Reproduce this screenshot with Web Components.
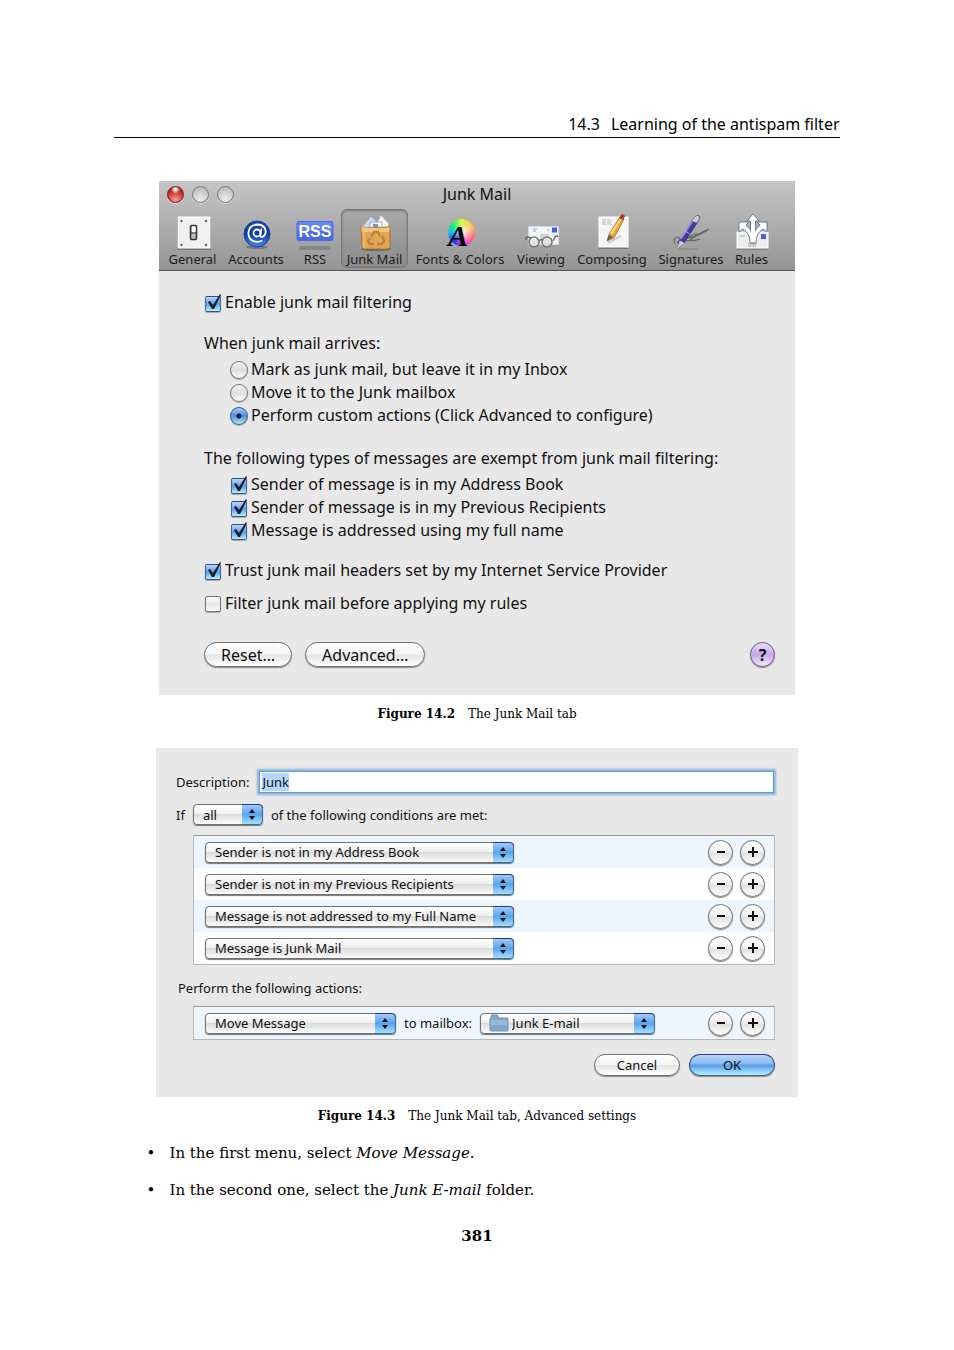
<!DOCTYPE html>
<html lang="en">
<head>
<meta charset="UTF-8">
<meta name="viewport" content="width=device-width, initial-scale=1.0">
<title>14.3 Learning of the antispam filter</title>
<style>
    body {
        margin: 0;
        background: #fff;
        color: #000;
    }
</style>
</head>
<body>
<manual-page section="14.3" heading="Learning of the antispam filter" number="381">
    <manual-figure label="Figure 14.2" caption="The Junk Mail tab">
        <junk-window></junk-window>
    </manual-figure>
    <manual-figure label="Figure 14.3" caption="The Junk Mail tab, Advanced settings">
        <rule-sheet></rule-sheet>
    </manual-figure>
    <manual-steps>
        <li>In the first menu, select <em>Move Message</em>.</li>
        <li>In the second one, select the <em>Junk E-mail</em> folder.</li>
    </manual-steps>
</manual-page>

<script>
const ICONS = {
    general: `
        <rect x="3" y="5" width="34" height="32" fill="#777"/>
        <rect x="4" y="4" width="32" height="31" fill="#f0f0f0" stroke="#fff"/>
        <g fill="#666"><circle cx="7.5" cy="8" r="1.2"/><circle cx="32" cy="8" r="1.2"/><circle cx="7.5" cy="32" r="1.2"/><circle cx="32" cy="32" r="1.2"/></g>
        <rect x="16.5" y="12.5" width="6" height="14" rx="1" fill="#bbb" stroke="#333" stroke-width="1.5"/>
        <rect x="18" y="13.5" width="3.5" height="6" fill="#fff"/>
        <path d="M17 20h5" stroke="#333"/>`,
    accounts: `
        <defs><linearGradient id="g" x2="0" y2="1"><stop stop-color="#1c4fb0"/><stop offset=".5" stop-color="#1238a0"/><stop offset="1" stop-color="#3f8eea"/></linearGradient></defs>
        <ellipse cx="20" cy="34" rx="11" ry="2" fill="#555" opacity=".5"/>
        <circle cx="20" cy="21" r="13" fill="url(#g)" stroke="#1a3f92"/>
        <circle cx="20" cy="20" r="3.5" fill="none" stroke="#fff" stroke-width="1.8"/>
        <path d="M24.5 15.5l-1.2 6.5q0 2.5 2.4 1.8q3-1.8 3-5.3q-.7-6.800-8.2-7q-8.5.5-9.2 8.500q.2 8.3 8.5 8.800q3 0 5.5-1.3" fill="none" stroke="#fff" stroke-width="1.8"/>`,
    rss: `
        <rect x="3" y="33" width="32" height="4" rx="2" fill="#666" opacity=".45"/>
        <rect x=".5" y="8" width="37" height="20" rx="2.5" fill="#4a6be6"/>
        <rect x="1.5" y="9" width="35" height="9" rx="2" fill="#6485f2"/>
        <text x="19" y="24" text-anchor="middle" font-family="Liberation Sans, sans-serif" font-weight="700" font-size="16" fill="#fff">RSS</text>`,
    junk: `
        <ellipse cx="20" cy="36" rx="15" ry="2" fill="#444" opacity=".5"/>
        <path d="M7 13l8-10 9 9v4H8z" fill="#cbd9f3" stroke="#8da0c9" stroke-width=".7"/>
        <path d="M21 10l4-8 8 9-2 6H19z" fill="#f8f8f5" stroke="#aaa" stroke-width=".7"/>
        <path d="M14 9h12v9H14z" fill="#eef3ff" stroke="#8794b5" stroke-width=".7"/>
        <path d="M17 11h5v3h-5z" fill="#7e93bd"/>
        <path d="M5 13l3 2 24-1 2-1v21l-2 2H8l-2-2z" fill="#e2a652" stroke="#a66b20" stroke-width=".8"/>
        <path d="M5 13l3 2h24l2-2-1 6H6z" fill="#f3c57c"/>
        <path d="M8 19v16" stroke="#f2ca8c"/>
        <path d="M15 24l3-5h4l2 4M26 23l2 5-2 3h-5M18 31h-4l-2-3 2-3" fill="none" stroke="#bb8540" stroke-width="2.5"/>`,
    fonts: `
        <foreignObject x="7" y="6" width="27" height="28"><div style="width:27px;height:27px;border-radius:50%;background:radial-gradient(circle at 60% 50%,#fffc,#fff0 55%),conic-gradient(#cf3,#fb4 60deg,#f65 100deg,#f4a 145deg,#b4f 180deg,#23e 220deg,#2be 270deg,#1e7 310deg,#cf3)"></div></foreignObject>
        <text x="7" y="33" font-family="Liberation Serif, serif" font-weight="700" font-style="italic" font-size="30" fill="#000">A</text>`,
    viewing: `
        <rect x="6" y="13" width="31" height="19" fill="#f2f4f7" stroke="#9fb4d0" stroke-width=".8"/>
        <rect x="30" y="14.5" width="5" height="5" fill="#3764e4"/>
        <path d="M11 16h4M11 18h3M25 17h2M18 22h9M18 24h8" stroke="#aaa"/>
        <path d="M5 27q-3-2 0-3l5 1M31 28l2-4q2-2 3 0M17 28q3-3 5 0" fill="none" stroke="#666" stroke-width="1.3"/>
        <circle cx="12" cy="29" r="5" fill="#ddd" fill-opacity=".8" stroke="#777" stroke-width="1.5"/>
        <circle cx="25" cy="29" r="5" fill="#ddd" fill-opacity=".8" stroke="#777" stroke-width="1.5"/>
        <path d="M9 27q2-3 5-1M22 27q2-3 5-1" stroke="#fff" fill="none"/>`,
    composing: `
        <rect x="6" y="5" width="29" height="31" fill="#777"/>
        <rect x="6" y="4" width="29" height="30" fill="#f4f4f4" stroke="#fff"/>
        <path d="M9 7h9M9 9h9M9 11h9" stroke="#ccc" stroke-width="1.5" stroke-dasharray="4 1"/>
        <path d="M15 30l13-7" stroke="#999" stroke-width="2" opacity=".4"/>
        <path d="M14 28l2-7L27 4l4 2-10 19z" fill="#e7a43b" stroke="#8c6428" stroke-width=".7"/>
        <path d="M17 20L28 4l1.500 1L19 22z" fill="#ffd27a"/>
        <path d="M14 28l2-6 4 2z" fill="#6b5b48"/>
        <path d="M26 5l2-3q2-2 4 1l-2 4z" fill="#a53d31"/>`,
    signatures: `
        <path d="M3 31q-3-6 3-7 4 2-1 6l11-5q5-4 9-4l-8 7q10-8 20-12-8 6-20 9M10 27q10 2 18-1" fill="none" stroke="#666" stroke-width="1.1"/>
        <path d="M6 36h20" stroke="#777" stroke-width="2" opacity=".4"/>
        <path d="M5 36l2-7L21 7l5-5 2 2-3 6L12 30z" fill="#433aa9" stroke="#26256d" stroke-width=".7"/>
        <path d="M19 8l6-6 3 2-3 6z" fill="#c8d0dc" stroke="#667" stroke-width=".7"/>
        <path d="M9 26L20 9" stroke="#928be6" stroke-width="1.5"/>
        <path d="M13 18l5 3M5 36l3-8 4 2z" stroke="#ccc" stroke-width=".7" fill="#ccc"/>`,
    rules: `
        <path d="M4 36h31" stroke="#666" stroke-width="2" opacity=".5"/>
        <rect x="4" y="19" width="31" height="16" fill="#eee" stroke="#fff"/>
        <rect x="28" y="21" width="5" height="5" fill="#4268e8"/>
        <path d="M15 31h9M15 33h8M7 23h5" stroke="#aaa"/>
        <path d="M17.500 30V8h-3.500l6-7 6 7h-3.500v22z" fill="#fff" stroke="#5b7594" stroke-width=".9"/>
        <path d="M17 30q0-10-7-14l-4 3V9h10l-3 3q5 4 7 11 2-7 7-11l-3-3h10v10l-4-3q-7 4-7 14z" fill="#fff" stroke="#5b7594" stroke-width=".9"/>
        <path d="M18 9h4v19h-4z" fill="#fff"/>`
};

class ManualPage extends HTMLElement {
    constructor(){
        super();
        this.attachShadow({mode: 'open'});
    }

    connectedCallback(){
        this.shadowRoot.innerHTML = `
        <style>
        :host {
            display: block;
            box-sizing: border-box;
            padding: 114px 12% 96px;
            font-family: "DejaVu Serif", serif;
            font-size: 15px;
        }

        header {
            display: flex;
            justify-content: flex-end;
            gap: 11px;
            padding-bottom: 2px;
            margin-bottom: 43px;
            border-bottom: 1px solid #000;
            font: 16px/21px "Noto Sans", sans-serif;
        }

        h1 {
            margin: 0;
            font: inherit;
        }

        footer {
            text-align: center;
            font-weight: bold;
            line-height: 24px;
            margin-top: 22px;
        }
        </style>

        <header><span>${this.getAttribute('section')}</span><h1>${this.getAttribute('heading')}</h1></header>
        <main><slot></slot></main>
        <footer>${this.getAttribute('number')}</footer>
        `;
    }
}

class ManualFigure extends HTMLElement {
    constructor(){
        super();
        this.attachShadow({mode: 'open'});
    }

    connectedCallback(){
        this.shadowRoot.innerHTML = `
        <style>
        :host {
            display: block;
        }

        figure {
            display: flex;
            flex-direction: column;
            align-items: center;
            margin: 0;
        }

        figcaption {
            display: flex;
            gap: 13px;
            padding: 9px 0 23px;
            font-size: 12px;
            line-height: 21px;
        }
        </style>

        <figure>
            <slot></slot>
            <figcaption><b>${this.getAttribute('label')}</b><span>${this.getAttribute('caption')}</span></figcaption>
        </figure>
        `;
    }
}

class ManualSteps extends HTMLElement {
    constructor(){
        super();
        this.attachShadow({mode: 'open'});
    }

    connectedCallback(){
        this.shadowRoot.innerHTML = `
        <style>
        :host {
            display: block;
            margin-top: -9px;
        }

        ul {
            display: flex;
            flex-direction: column;
            gap: 13px;
            margin: 0;
            padding-left: 55px;
            line-height: 24px;
            list-style: none;
        }

        ::slotted(li)::before {
            content: "•";
            display: inline-block;
            width: 23px;
            margin-left: -23px;
        }
        </style>

        <ul><slot></slot></ul>
        `;
    }
}

class ToolItem extends HTMLElement {
    constructor(){
        super();
        this.attachShadow({mode: 'open'});
    }

    connectedCallback(){
        this.shadowRoot.innerHTML = `
        <style>
        :host {
            display: flex;
            justify-content: center;
        }

        button {
            display: flex;
            flex-direction: column;
            align-items: center;
            flex: none;
            height: 59px;
            padding: 3px 5px 0;
            border: 1px solid transparent;
            border-radius: 6px;
            background: none;
            color: #1c1c1c;
            font: 13px/16px "Noto Sans", sans-serif;
            white-space: nowrap;
        }

        :host([selected]) button {
            border-color: #777;
            background: rgba(0, 0, 0, .07);
            box-shadow: inset 0 1px 2px #777;
        }

        svg {
            flex: none;
            width: 38px;
            height: 38px;
            overflow: visible;
        }
        </style>

        <button type="button"><svg viewBox="0 0 38 38" aria-hidden="true">${ICONS[this.getAttribute('icon')]}</svg><slot></slot></button>
        `;
    }
}

// A column of check boxes or radio buttons. "items" is split on |, "checked" lists indexes.
class OptionList extends HTMLElement {
    constructor(){
        super();
        this.attachShadow({mode: 'open'});
    }

    connectedCallback(){
        const type = this.getAttribute('type');
        const checked = (this.getAttribute('checked') || '').split(' ');
        const rows = this.getAttribute('items').split('|').map((item, i) => `
            <label>
                <span class="box">
                    <input type="${type}" name="choice" ${checked.includes(String(i)) ? 'checked' : ''}>
                    <svg viewBox="0 0 18 20" aria-hidden="true"><path d="M4 9l2-1 3 4 7-11 1 1-7 14H8z"/></svg>
                </span>
                <span>${item}</span>
            </label>`).join('');

        this.shadowRoot.innerHTML = `
        <style>
        :host {
            display: block;
        }

        label {
            display: flex;
            align-items: center;
            gap: 3px;
            line-height: 23px;
        }

        .box {
            display: grid;
            place-items: center;
            width: 18px;
            height: 20px;
        }

        .box > * {
            grid-area: 1 / 1;
        }

        input {
            appearance: none;
            box-sizing: border-box;
            width: 16px;
            height: 16px;
            margin: 0;
            border: 1px solid #777;
            border-radius: 2px;
            background: linear-gradient(#fff, #e6e6e6 50%, #fafafa);
            box-shadow: 0 1px 1px #aaa;
        }

        input[type=radio] {
            width: 18px;
            height: 18px;
            border-radius: 50%;
            background: linear-gradient(#f4f4f4, #ddd 50%, #fff);
        }

        input:checked {
            border-color: #2c4a8c #45618f #44566e;
            background: linear-gradient(#bcd8f8, #5c9fe6 50%, #b8edff);
        }

        input[type=radio]:checked {
            background: radial-gradient(circle, #0a1430 2px, transparent 3px), linear-gradient(#a5c8f4, #4a8fe0 50%, #b0ecff);
        }

        svg {
            display: none;
            width: 18px;
            height: 20px;
            margin-bottom: 2px;
            fill: #14202f;
            pointer-events: none;
        }

        input[type=checkbox]:checked + svg {
            display: block;
        }
        </style>
        ${rows}
        `;
    }
}

class AquaButton extends HTMLElement {
    constructor(){
        super();
        this.attachShadow({mode: 'open'});
    }

    connectedCallback(){
        this.shadowRoot.innerHTML = `
        <style>
        :host {
            display: block;
        }

        button {
            display: block;
            box-sizing: border-box;
            width: 100%;
            height: 22px;
            padding: 0 16px;
            border: 1px solid #707070;
            border-radius: 13px;
            background: linear-gradient(#fff, #f4f4f4 48%, #e4e4e4 52%, #fff);
            box-shadow: 0 1px 1px #888;
            color: #111;
            font: inherit;
            line-height: 18px;
        }

        :host([large]) button {
            height: 25px;
        }

        :host([primary]) button {
            border-color: #2a3f96 #3a5a96 #46627f;
            background: linear-gradient(#b9d6f8, #84b6f1 45%, #559be8 50%, #b5f0ff);
        }

        :host([round]) button {
            width: 25px;
            height: 25px;
            padding: 0;
            border-radius: 50%;
            background: linear-gradient(#fff, #f0f0f0 48%, #e0e0e0 52%, #fff);
        }

        :host([help]) button {
            border-color: #6c5a88;
            background: linear-gradient(#eadcf8, #c5a9ea 50%, #f4e6ff);
            font-weight: bold;
        }
        </style>

        <button type="button" aria-label="${this.getAttribute('label') || this.textContent}"><slot></slot></button>
        `;
    }
}

class AquaSelect extends HTMLElement {
    constructor(){
        super();
        this.attachShadow({mode: 'open'});
    }

    connectedCallback(){
        const folder = this.hasAttribute('folder') ? `
            <svg class="folder" viewBox="0 0 20 18" aria-hidden="true">
                <path d="M2 4V2q0-1 1-1h5q1 0 1 1v2h9q1 0 1 1v11q0 1-1 1H2q-1 0-1-1V5q0-1 1-1z" fill="#7fa8c9" stroke="#6d98b8"/>
                <path d="M2 6h16v5H2z" fill="#98bcd8"/>
            </svg>` : '';

        this.shadowRoot.innerHTML = `
        <style>
        :host {
            display: grid;
        }

        select,
        svg {
            grid-area: 1 / 1;
        }

        select {
            appearance: none;
            box-sizing: border-box;
            width: 100%;
            height: 21px;
            padding: 0 22px 0 9px;
            border: 1px solid #707070;
            border-radius: 4px;
            background: linear-gradient(#fff, #efefef 46%, #dcdcdc 50%, #fbfbfb);
            box-shadow: 0 1px 1px #777;
            color: #111;
            font: inherit;
            line-height: 18px;
        }

        :host([folder]) select {
            padding-left: 31px;
        }

        svg {
            align-self: center;
            pointer-events: none;
        }

        .cap {
            justify-self: end;
            width: 21px;
            height: 21px;
        }

        .folder {
            width: 20px;
            height: 18px;
            margin-left: 9px;
        }
        </style>

        <select aria-label="${this.getAttribute('label')}"><option>${this.getAttribute('value')}</option></select>
        ${folder}
        <svg class="cap" viewBox="0 0 21 21" aria-hidden="true">
            <defs><linearGradient id="cap" x2="0" y2="1"><stop stop-color="#a8cdf6"/><stop offset=".5" stop-color="#5ba3ee"/><stop offset="1" stop-color="#a9e8ff"/></linearGradient></defs>
            <path d="M0 0h17q4 0 4 4v13q0 4-4 4H0z" fill="url(#cap)"/>
            <path d="M0 .5h17q3.500 0 3.500 3.500" fill="none" stroke="#25348f"/>
            <path d="M20.500 4v13q0 3.500-3.500 3.500H0" fill="none" stroke="#45688c"/>
            <path d="M7 9l3-4 3 4zM7 12h6l-3 4z" fill="#111"/>
        </svg>
        `;
    }
}

class RuleRow extends HTMLElement {
    constructor(){
        super();
        this.attachShadow({mode: 'open'});
    }

    connectedCallback(){
        this.shadowRoot.innerHTML = `
        <style>
        :host {
            display: flex;
            align-items: center;
            gap: 7px;
            height: 32px;
            padding: 0 9px 0 11px;
            background: #fff;
        }

        :host(:nth-child(odd)) {
            background: #edf5ff;
        }

        .fields {
            display: flex;
            align-items: center;
            flex: 1;
            gap: 8px;
        }

        svg {
            display: block;
            margin: auto;
            stroke: #111;
            stroke-width: 2;
        }
        </style>

        <div class="fields"><slot></slot></div>
        <aqua-button round label="Remove"><svg width="12" height="12" aria-hidden="true"><path d="M2 6h8"/></svg></aqua-button>
        <aqua-button round label="Add"><svg width="12" height="12" aria-hidden="true"><path d="M1 6h10M6 1v10"/></svg></aqua-button>
        `;
    }
}

class JunkWindow extends HTMLElement {
    constructor(){
        super();
        this.attachShadow({mode: 'open'});
    }

    connectedCallback(){
        this.shadowRoot.innerHTML = `
        <style>
        :host {
            display: block;
            width: 100%;
            max-width: 636px;
            background: #e8e8e8;
            color: #111;
            font: 16px/23px "Noto Sans", sans-serif;
        }

        header {
            background: linear-gradient(#c5c5c5, #959595);
            border-bottom: 1px solid #505050;
        }

        .title {
            display: grid;
            grid-template-columns: 1fr auto 1fr;
            align-items: center;
            padding: 0 8px;
            height: 26px;
        }

        h2 {
            margin: 0;
            font: inherit;
        }

        .lights {
            display: flex;
            gap: 8px;
        }

        .lights i {
            box-sizing: border-box;
            width: 17px;
            height: 17px;
            border: 1px solid #777;
            border-radius: 50%;
            background: radial-gradient(circle at 50% 80%, #eee, #bbb 80%);
            box-shadow: 0 1px 1px #ddd;
        }

        .lights i:first-child {
            border-color: #70211e;
            background: radial-gradient(circle at 50% 15%, #fff 5%, transparent 30%), radial-gradient(circle at 50% 85%, #ff9a90, #c8302c 60%, #8d1714);
        }

        nav {
            display: grid;
            grid-template-columns: 47px 56px 38px 57px 90px 48px 70px 64px 33px;
            gap: 12px;
            padding: 2px 10px;
        }

        .body {
            padding: 20px 20px 28px 45px;
        }

        p {
            margin: 18px 0 3px;
        }

        .indent {
            margin: 0 0 20px 26px;
        }

        .exempt {
            margin-bottom: 17px;
        }

        .trust {
            margin-bottom: 10px;
        }

        .actions {
            display: flex;
            align-items: center;
            gap: 13px;
            margin-top: 27px;
        }

        .actions :last-child {
            margin-left: auto;
        }
        </style>

        <header>
            <div class="title"><span class="lights"><i></i><i></i><i></i></span><h2>Junk Mail</h2></div>
            <nav>
                <tool-item icon="general">General</tool-item>
                <tool-item icon="accounts">Accounts</tool-item>
                <tool-item icon="rss">RSS</tool-item>
                <tool-item icon="junk" selected>Junk Mail</tool-item>
                <tool-item icon="fonts">Fonts &amp; Colors</tool-item>
                <tool-item icon="viewing">Viewing</tool-item>
                <tool-item icon="composing">Composing</tool-item>
                <tool-item icon="signatures">Signatures</tool-item>
                <tool-item icon="rules">Rules</tool-item>
            </nav>
        </header>
        <div class="body">
            <option-list type="checkbox" items="Enable junk mail filtering" checked="0"></option-list>
            <p>When junk mail arrives:</p>
            <option-list class="indent" type="radio" checked="2"
                items="Mark as junk mail, but leave it in my Inbox|Move it to the Junk mailbox|Perform custom actions (Click Advanced to configure)"></option-list>
            <p>The following types of messages are exempt from junk mail filtering:</p>
            <option-list class="indent exempt" type="checkbox" checked="0 1 2"
                items="Sender of message is in my Address Book|Sender of message is in my Previous Recipients|Message is addressed using my full name"></option-list>
            <option-list class="trust" type="checkbox" items="Trust junk mail headers set by my Internet Service Provider" checked="0"></option-list>
            <option-list type="checkbox" items="Filter junk mail before applying my rules"></option-list>
            <div class="actions">
                <aqua-button large>Reset…</aqua-button>
                <aqua-button large>Advanced…</aqua-button>
                <aqua-button round help label="Help">?</aqua-button>
            </div>
        </div>
        `;
    }
}

class RuleSheet extends HTMLElement {
    constructor(){
        super();
        this.attachShadow({mode: 'open'});
    }

    connectedCallback(){
        this.shadowRoot.innerHTML = `
        <style>
        :host {
            display: block;
            box-sizing: border-box;
            width: 100%;
            max-width: 642px;
            padding: 22px 23px 21px 20px;
            background: #e8e8e8;
            color: #111;
            font: 13px/20px "Noto Sans", sans-serif;
        }

        .line {
            display: flex;
            align-items: center;
            gap: 8px;
        }

        .line + .line {
            margin: 10px 0;
        }

        input {
            flex: 1;
            min-width: 0;
            box-sizing: border-box;
            height: 22px;
            margin: 1px 1px 1px 2px;
            padding: 0 2px;
            border: 1px solid #6b9ac8;
            outline: none;
            background: #fff;
            box-shadow: 0 0 2px 2px #86b4de;
            color: #111;
            font: inherit;
        }

        input::selection {
            background: #b4d5fe;
            color: #111;
        }

        .table {
            margin-left: 17px;
            border: 1px solid #b8b8b8;
            border-top-color: #999;
        }

        p {
            margin: 13px 0 8px 2px;
        }

        .all {
            width: 70px;
        }

        .wide {
            width: 309px;
        }

        .action {
            width: 191px;
        }

        .mailbox {
            width: 175px;
        }

        .buttons {
            display: flex;
            justify-content: flex-end;
            gap: 9px;
            margin-top: 14px;
        }

        .buttons > * {
            width: 86px;
        }
        </style>

        <div class="line"><label for="description">Description:</label><input id="description" type="text" value="Junk"></div>
        <div class="line"><span>If</span><aqua-select class="all" label="Match" value="all"></aqua-select><span>of the following conditions are met:</span></div>
        <div class="table">
            <rule-row><aqua-select class="wide" label="Condition 1" value="Sender is not in my Address Book"></aqua-select></rule-row>
            <rule-row><aqua-select class="wide" label="Condition 2" value="Sender is not in my Previous Recipients"></aqua-select></rule-row>
            <rule-row><aqua-select class="wide" label="Condition 3" value="Message is not addressed to my Full Name"></aqua-select></rule-row>
            <rule-row><aqua-select class="wide" label="Condition 4" value="Message is Junk Mail"></aqua-select></rule-row>
        </div>
        <p>Perform the following actions:</p>
        <div class="table">
            <rule-row>
                <aqua-select class="action" label="Action" value="Move Message"></aqua-select>
                <span>to mailbox:</span>
                <aqua-select class="mailbox" folder label="Mailbox" value="Junk E-mail"></aqua-select>
            </rule-row>
        </div>
        <div class="buttons"><aqua-button>Cancel</aqua-button><aqua-button primary>OK</aqua-button></div>
        `;

        const input = this.shadowRoot.querySelector('#description');
        input.focus({preventScroll: true});
        input.select();
    }
}

customElements.define('tool-item', ToolItem);
customElements.define('option-list', OptionList);
customElements.define('aqua-button', AquaButton);
customElements.define('aqua-select', AquaSelect);
customElements.define('rule-row', RuleRow);
customElements.define('junk-window', JunkWindow);
customElements.define('rule-sheet', RuleSheet);
customElements.define('manual-figure', ManualFigure);
customElements.define('manual-steps', ManualSteps);
customElements.define('manual-page', ManualPage);
</script>
</body>
</html>
